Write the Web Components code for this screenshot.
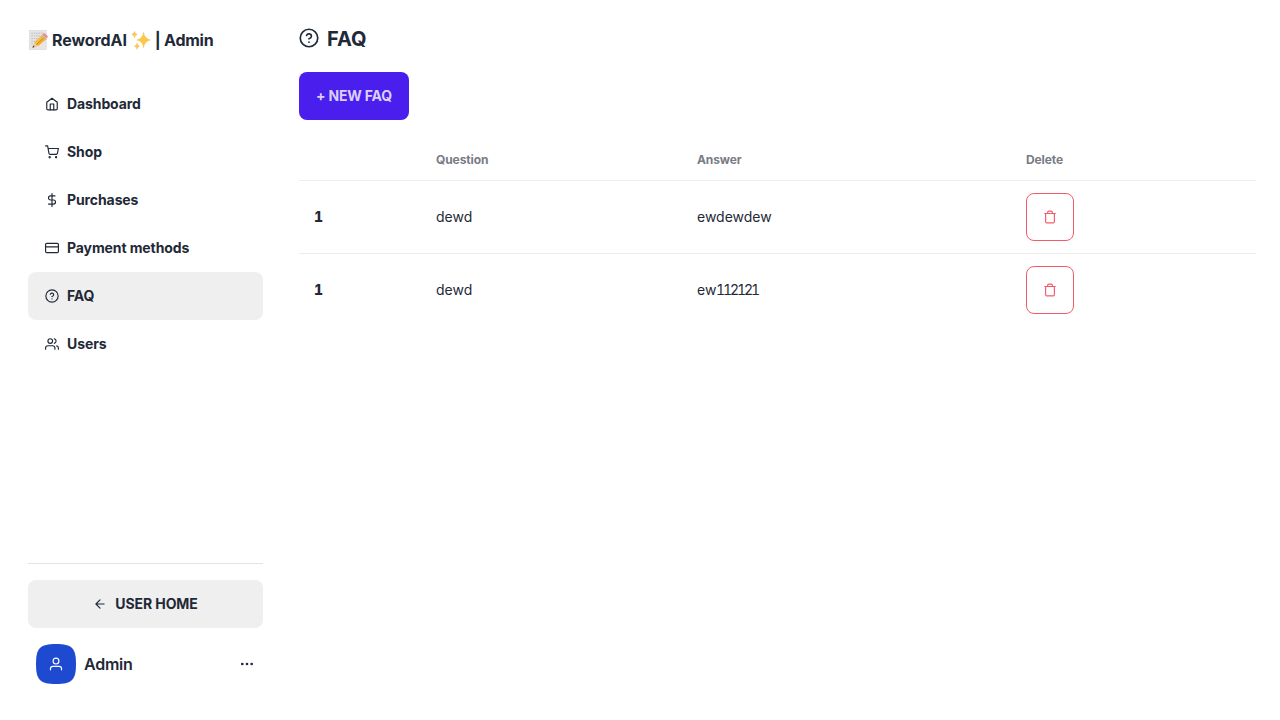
<!DOCTYPE html>
<html lang="en">
<head>
<meta charset="utf-8">
<title>RewordAI Admin – FAQ</title>
<style>
  body { margin: 0; background: #fff; color: #1f2937; font-family: Inter, sans-serif; font-size: 14px; line-height: 20px; overflow: hidden; }
</style>
</head>
<body>
<admin-app></admin-app>
<script>
const ICONS = {
  home: '<path d="m3 9 9-7 9 7v11a2 2 0 0 1-2 2H5a2 2 0 0 1-2-2z"/><path d="M9 22V12h6v10"/>',
  cart: '<circle cx="8" cy="21" r="1"/><circle cx="19" cy="21" r="1"/><path d="M1 1.500h3.500l2.300 12.920a2 2 0 0 0 2 1.580h10.500a2 2 0 0 0 1.950-1.570L23 6H5.300"/>',
  dollar: '<path d="M12 1v22M17 5H9.5a3.5 3.5 0 0 0 0 7h5a3.5 3.5 0 0 1 0 7H6"/>',
  card: '<rect x="1" y="4" width="22" height="16" rx="2"/><path d="M1 10h22"/>',
  help: '<circle cx="12" cy="12" r="10.500"/><path d="M9.09 9a3 3 0 0 1 5.83 1c0 2-3 3-3 3M12 17h.01"/>',
  users: '<path d="M17 21v-2a4 4 0 0 0-4-4H5a4 4 0 0 0-4 4v2"/><circle cx="9" cy="7" r="4"/><path d="M23 21v-2a4 4 0 0 0-3-3.87M16 3.13a4 4 0 0 1 0 7.75"/>',
  user: '<path d="M21.500 22v-2a4 4 0 0 0-4-4h-11a4 4 0 0 0-4 4v2"/><circle cx="12" cy="7" r="5"/>',
  back: '<path d="m12 19-7-7 7-7M19 12H5"/>',
  more: '<g fill="currentColor"><circle cx="4" cy="12" r="1.3"/><circle cx="12" cy="12" r="1.3"/><circle cx="20" cy="12" r="1.3"/></g>',
  trash: '<path d="M3 6h18M19.500 6v14a2 2 0 0 1-2 2h-11a2 2 0 0 1-2-2V6M8 6V4a2 2 0 0 1 2-2h4a2 2 0 0 1 2 2v2"/>'
};

function define(name, render) {
  customElements.define(name, class extends HTMLElement {
    connectedCallback() {
      if (!this.shadowRoot) this.attachShadow({ mode: 'open' }).innerHTML = render(this);
    }
  });
}

define('ui-icon', el => `
  <style>:host{display:block;flex:none;width:var(--size,14px);height:var(--size,14px)} svg{display:block;overflow:visible}</style>
  <svg width="100%" height="100%" viewBox="0 0 24 24" fill="none" stroke="currentColor" stroke-width="2" stroke-linecap="round" stroke-linejoin="round">${ICONS[el.getAttribute('name')]}</svg>`);

define('memo-mark', () => `
  <style>:host{display:block;flex:none;width:20px;height:20px} svg{display:block}</style>
  <svg width="20" height="20" viewBox="0 0 20 20">
    <defs><linearGradient id="p" x1="0" y1="0" x2="1" y2="1"><stop offset="0" stop-color="#ffd35a"/><stop offset="1" stop-color="#e8991b"/></linearGradient></defs>
    <rect x="1.2" y=".4" width="17" height="19.2" fill="#e6e6e6" stroke="#d2d2d2" stroke-width=".5"/>
    <g stroke="#b4b4b4" stroke-width=".8" stroke-dasharray="1.7 .7"><path d="M3.2 3.2h12.6M3.2 5.9h12M3.2 8.6h9M3.2 11.3h5M3.2 14h2"/></g>
    <path d="M6.100 12.600 14 4.800 18.500 9 9.800 16.300z" fill="url(#p)"/>
    <path d="M8.200 14.700 16.500 7" stroke="#c97a12" stroke-width=".7"/>
    <path d="m13.200 5.600 1.200-1.100 4.500 4.200-1.100 1z" fill="#b9b9b9"/>
    <path d="m14.400 4.500 1.300-1.100q.6-.5 1.300.1l2.600 2.500q.6.6 0 1.200l-.9 1z" fill="#ee8b83"/>
    <path d="m4.600 17.600 1.500-5 3.700 3.700z" fill="#efc892"/><path d="m4.300 17.800.9-2.300 1.500 1.400z" fill="#3a3a3a"/>
  </svg>`);

define('sparkle-mark', () => `
  <style>:host{display:block;flex:none;width:20px;height:20px} svg{display:block}</style>
  <svg width="20" height="20" viewBox="0 0 20 20" fill="#fbc84c" stroke="#f3b253" stroke-width=".3">
    <path d="M12.600 2.100q.7 6.400 6.800 7.900-6.100 1.500-6.800 7.900-.7-6.400-6.800-7.900 6.100-1.500 6.800-7.900z"/>
    <path d="M3.500 1.200q.4 2.700 2.800 3.300-2.400.6-2.800 3.300-.4-2.700-2.800-3.300 2.400-.6 2.800-3.300z"/>
    <path d="M6 13q.4 2.600 2.700 3.200-2.300.6-2.700 3.200-.4-2.600-2.700-3.200 2.300-.6 2.700-3.200z"/>
  </svg>`);

define('app-brand', () => `
  <style>:host{display:flex;align-items:center;height:24px;font-size:16px;line-height:24px;font-weight:660;white-space:nowrap;letter-spacing:-.08px}
  .name{margin:0 4px} .role{margin-left:4px;letter-spacing:-.25px}</style>
  <memo-mark></memo-mark><span class="name">RewordAI</span><sparkle-mark></sparkle-mark><span class="role">| Admin</span>`);

define('nav-item', el => `
  <style>:host{display:flex;align-items:center;gap:8px;height:48px;padding:0 17px;box-sizing:border-box;border-radius:8px;font-weight:660;letter-spacing:-.1px}
  :host([active]){background:#efefef}</style>
  <ui-icon name="${el.getAttribute('icon')}"></ui-icon><slot></slot>`);

define('ui-button', () => `
  <style>:host{display:flex;align-items:center;justify-content:center;box-sizing:border-box;height:48px;border-radius:8px;font-weight:660;letter-spacing:-.08px;gap:8px;white-space:nowrap}
  :host([kind=primary]){background:#4a1eec;color:#dad0ff;width:110px;letter-spacing:-.18px}
  :host([kind=neutral]){background:#efefef}
  :host([kind=danger]){width:48px;border:1px solid #f45b69;color:#f45b69}</style><slot></slot>`);

define('user-row', () => `
  <style>:host{display:flex;align-items:center;padding:0 8px;height:40px;font-size:16px;line-height:24px;font-weight:640;letter-spacing:-.25px;gap:8px}
  .avatar{width:40px;height:40px;display:grid;place-items:center;color:#fff;background:#1d4ad0;clip-path:path("M20 0C4 0 0 4 0 20S4 40 20 40 40 36 40 20 36 0 20 0Z")}
  .name{flex:1} .more{margin-right:1px}</style>
  <div class="avatar"><ui-icon name="user"></ui-icon></div><span class="name">Admin</span><ui-icon class="more" name="more"></ui-icon>`);

define('app-sidebar', () => `
  <style>:host{display:flex;flex-direction:column;box-sizing:border-box;width:235px;height:100%;padding:28px 0 36px}
  nav{margin-top:28px} .foot{margin-top:auto;border-top:1px solid #e2e3e7;padding-top:16px;display:grid;gap:16px}</style>
  <app-brand></app-brand>
  <nav>
    <nav-item icon="home">Dashboard</nav-item>
    <nav-item icon="cart">Shop</nav-item>
    <nav-item icon="dollar">Purchases</nav-item>
    <nav-item icon="card">Payment methods</nav-item>
    <nav-item icon="help" active>FAQ</nav-item>
    <nav-item icon="users">Users</nav-item>
  </nav>
  <div class="foot">
    <ui-button kind="neutral"><ui-icon name="back"></ui-icon>USER HOME</ui-button>
    <user-row></user-row>
  </div>`);

const ROW = 'display:grid;grid-template-columns:121px 261px 329px 246px;align-items:center;box-sizing:border-box;';

define('faq-row', el => `
  <style>:host{${ROW}height:72px} :host(:not(:last-child)){height:73px;border-bottom:1px solid #ededee}
  div{padding-left:16px} .n{font-weight:800;font-feature-settings:"tnum";text-indent:-1px}
  ::slotted(.digits){font-feature-settings:"tnum";letter-spacing:-2.1px;margin-left:-.4px}</style>
  <div class="n">${el.getAttribute('n')}</div><div>${el.getAttribute('question')}</div><div><slot></slot></div>
  <div><ui-button kind="danger"><ui-icon name="trash"></ui-icon></ui-button></div>`);

define('faq-table', () => `
  <style>:host{display:block;width:957px}
  .head{${ROW}height:41px;border-bottom:1px solid #ededee;font-size:12px;line-height:16px;font-weight:750;letter-spacing:-.1px;color:#777c85}
  .head span{padding-left:16px}</style>
  <div class="head"><span></span><span>Question</span><span>Answer</span><span>Delete</span></div>
  <slot></slot>`);

define('page-title', () => `
  <style>:host{display:flex;align-items:center;gap:8px;height:28px;font-size:20px;line-height:28px;font-weight:700;--size:20px}
  span{padding-top:2px}</style>
  <ui-icon name="help"></ui-icon><span><slot></slot></span>`);

define('admin-app', () => `
  <style>:host{display:flex;gap:36px;box-sizing:border-box;width:1280px;height:720px;padding-left:28px}
  main{flex:1;padding-top:24px} .action{margin:20px 0}</style>
  <app-sidebar></app-sidebar>
  <main>
    <page-title>FAQ</page-title>
    <ui-button class="action" kind="primary">+ NEW FAQ</ui-button>
    <faq-table>
      <faq-row n="1" question="dewd">ewdewdew</faq-row>
      <faq-row n="1" question="dewd">ew<span class="digits">112121</span></faq-row>
    </faq-table>
  </main>`);
</script>
</body>
</html>
